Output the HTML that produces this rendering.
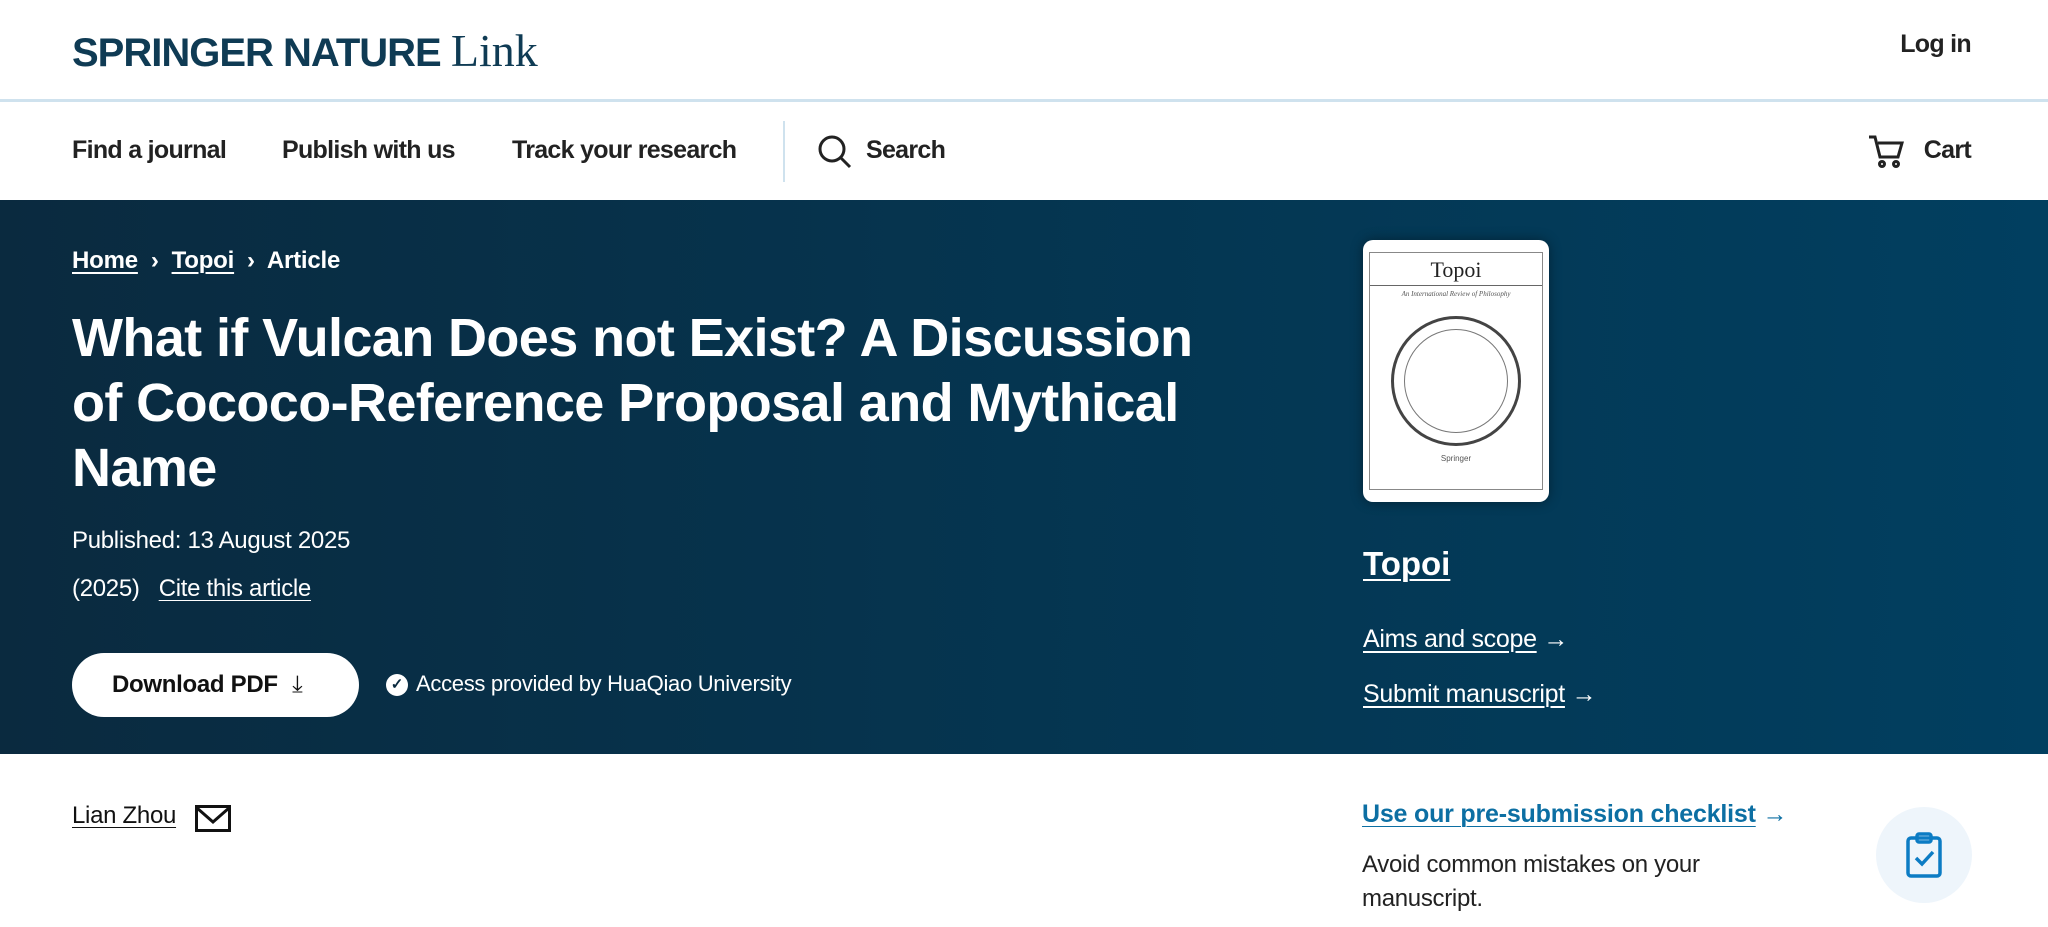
<!DOCTYPE html>
<html><head><meta charset="utf-8"><style>
*{margin:0;padding:0;box-sizing:border-box}
body{width:2048px;height:927px;overflow:hidden;background:#fff;font-family:"Liberation Sans",sans-serif;color:#222;position:relative}
.a{position:absolute;white-space:nowrap}
.nav{font-size:25px;font-weight:bold;color:#222;letter-spacing:-0.7px}
.hero{position:absolute;left:0;top:200px;width:2048px;height:554px;background:linear-gradient(90deg,#0a2a3f 0%,#053550 50%,#013f60 100%)}
.w{color:#fff}
u{text-decoration:underline;text-underline-offset:4px;text-decoration-thickness:2px}
</style></head><body>
<div class="a" style="left:72px;top:24px;font-size:40px;font-weight:bold;color:#0f3b54;letter-spacing:-1px">SPRINGER NATURE <span style="font-family:'Liberation Serif',serif;font-weight:normal;color:#0f3b54;font-size:46px;letter-spacing:0">Link</span></div>
<div class="a nav" style="right:77px;top:30px">Log in</div>
<div class="a" style="left:0;top:99px;width:2048px;height:3px;background:#cfe2ee"></div>
<div class="a nav" style="left:72px;top:136px">Find a journal</div>
<div class="a nav" style="left:282px;top:136px">Publish with us</div>
<div class="a nav" style="left:512px;top:136px">Track your research</div>
<div class="a" style="left:783px;top:121px;width:2px;height:61px;background:#cfe2ee"></div>
<svg class="a" style="left:817px;top:134px" width="36" height="36" viewBox="0 0 36 36" fill="none" stroke="#222" stroke-width="3"><circle cx="15" cy="15" r="12"/><path d="M24 24l9 9"/></svg>
<div class="a nav" style="left:866px;top:136px">Search</div>
<svg class="a" style="left:1868px;top:134px" width="36" height="34" viewBox="0 0 36 34" fill="none" stroke="#222" stroke-width="3"><path d="M1 3h6l5 20h18l4-14H10"/><circle cx="14" cy="30" r="2.5"/><circle cx="28" cy="30" r="2.5"/></svg>
<div class="a nav" style="right:77px;top:136px">Cart</div>

<div class="hero">
<div class="a w" style="left:72px;top:47px;font-size:24px;font-weight:bold;letter-spacing:-0.2px"><u>Home</u> &nbsp;›&nbsp; <u>Topoi</u> &nbsp;›&nbsp; Article</div>
<div class="a w" style="left:72px;top:106px;font-size:54px;font-weight:bold;line-height:65px;letter-spacing:-0.6px">What if Vulcan Does not Exist? A Discussion<br>of Cococo-Reference Proposal and Mythical<br>Name</div>
<div class="a w" style="left:72px;top:327px;font-size:24px;letter-spacing:-0.3px">Published: 13 August 2025</div>
<div class="a w" style="left:72px;top:375px;font-size:24px;letter-spacing:-0.3px">(2025) &nbsp;&nbsp;<u style="text-decoration-thickness:1px">Cite this article</u></div>
<div class="a" style="left:72px;top:453px;width:287px;height:64px;border-radius:32px;background:#fff;font-size:24px;font-weight:bold;color:#111;padding:18px 0 0 40px;letter-spacing:-0.3px">Download PDF <span style="font-weight:normal;margin-left:8px">⤓</span></div>
<div class="a" style="left:386px;top:474px;width:22px;height:22px;border-radius:50%;background:#fff;color:#0a2a3f;font-size:15px;text-align:center;line-height:22px;font-weight:bold">✓</div>
<div class="a w" style="left:416px;top:471px;font-size:22px;letter-spacing:-0.3px">Access provided by HuaQiao University</div>
<div class="a" style="left:1363px;top:40px;width:186px;height:262px;background:#fff;border-radius:10px;box-shadow:0 0 12px rgba(0,0,0,.4)">
 <div style="position:absolute;left:6px;top:12px;right:6px;bottom:12px;border:1px solid #888">
  <div style="text-align:center;font-family:'Liberation Serif',serif;font-size:22px;color:#222;border-bottom:1px solid #666;padding:4px 0 2px">Topoi</div>
  <div style="text-align:center;font-family:'Liberation Serif',serif;font-style:italic;font-size:7px;color:#555;margin-top:4px">An International Review of Philosophy</div>
  <div style="width:130px;height:130px;border:3px solid #444;border-radius:50%;margin:18px auto 0;position:relative"><div style="position:absolute;inset:10px;border:1px solid #777;border-radius:50%"></div></div>
  <div style="text-align:center;font-size:8px;color:#555;margin-top:8px">Springer</div>
 </div>
</div>
<div class="a w" style="left:1363px;top:345px;font-size:33px;font-weight:bold"><u>Topoi</u></div>
<div class="a w" style="left:1363px;top:425px;font-size:25px;letter-spacing:-0.3px"><u>Aims and scope</u> →</div>
<div class="a w" style="left:1363px;top:480px;font-size:25px;letter-spacing:-0.3px"><u>Submit manuscript</u> →</div>
</div>

<div class="a" style="left:72px;top:802px;font-size:24px;color:#111;letter-spacing:-0.3px"><u style="text-decoration-thickness:1px">Lian Zhou</u></div>
<svg class="a" style="left:195px;top:805px" width="36" height="27" viewBox="0 0 36 27" fill="none" stroke="#111" stroke-width="3"><rect x="1.5" y="1.5" width="33" height="24"/><path d="M2 3l16 14L34 3"/></svg>
<div class="a" style="left:1362px;top:800px;font-size:25px;font-weight:bold;color:#0c6fa3;letter-spacing:-0.2px"><u style="text-decoration-thickness:1px">Use our pre-submission checklist</u> →</div>
<div class="a" style="left:1362px;top:848px;font-size:24px;color:#222;line-height:34px;white-space:normal;width:420px;letter-spacing:-0.3px">Avoid common mistakes on your manuscript.</div>
<div class="a" style="left:1876px;top:807px;width:96px;height:96px;border-radius:50%;background:#eef5fb"></div>
<svg class="a" style="left:1905px;top:832px" width="38" height="46" viewBox="0 0 38 46" fill="none" stroke="#0c7cc4" stroke-width="3.5"><rect x="3" y="6" width="32" height="38" rx="3"/><rect x="12" y="2" width="14" height="8" rx="2"/><path d="M11 26l6 6 11-12"/></svg>
</body></html>
